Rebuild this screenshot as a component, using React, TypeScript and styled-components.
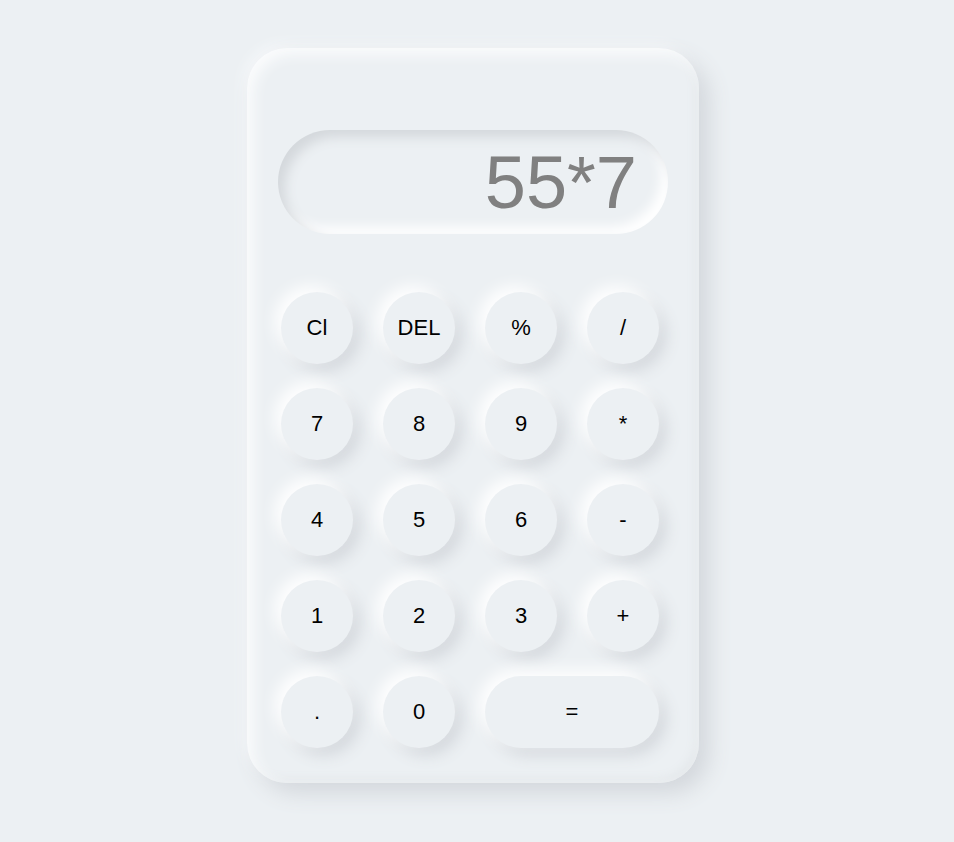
import React from 'react';
import styled, { createGlobalStyle } from 'styled-components';

const GlobalStyle = createGlobalStyle`
  html, body {
    margin: 0;
    background: #ecf0f3;
  }
  body {
    font-family: 'Liberation Sans', Arial, sans-serif;
  }
`;

const Page = styled.div`
  min-height: 842px;
  padding: 48px 0 0 247px;
  box-sizing: border-box;
`;

const Card = styled.div`
  width: 452px;
  box-sizing: border-box;
  padding: 82px 31px 35px 31px;
  background: #ecf0f3;
  border-radius: 40px;
  box-shadow: 10px 10px 22px #d3d7dc, -4px -4px 12px #f6f8fa,
    inset 6px 6px 14px #fbfcfd, inset -4px -4px 10px #e4e8eb;
`;

const Display = styled.div`
  height: 104px;
  border-radius: 52px;
  background: #ecf0f3;
  box-shadow: inset 7px 7px 12px #d4d8dc, inset -7px -7px 12px #ffffff;
  display: flex;
  align-items: center;
  justify-content: flex-end;
  padding: 0 31px 0 0;
  font-size: 74px;
  color: #808080;
`;

const Keys = styled.div`
  margin: 58px 0 0 3px;
  display: grid;
  grid-template-columns: repeat(4, 72px);
  grid-auto-rows: 72px;
  column-gap: 30px;
  row-gap: 24px;
`;

const Key = styled.button<{ $wide?: boolean }>`
  grid-column: ${(p) => (p.$wide ? 'span 2' : 'auto')};
  border: none;
  border-radius: 36px;
  background: #ecf0f3;
  box-shadow: -6px -6px 16px #ffffff, 7px 7px 16px #d3d7dc;
  font-family: 'Liberation Sans', Arial, sans-serif;
  font-size: 22px;
  color: #000;
  padding: 0;
  cursor: pointer;
`;

const keys = [
  'Cl', 'DEL', '%', '/',
  '7', '8', '9', '*',
  '4', '5', '6', '-',
  '1', '2', '3', '+',
  '.', '0', '=',
];

const App = () => (
  <>
    <GlobalStyle />
    <Page>
      <Card>
        <Display>55*7</Display>
        <Keys>
          {keys.map((k) => (
            <Key key={k} $wide={k === '='}>
              {k}
            </Key>
          ))}
        </Keys>
      </Card>
    </Page>
  </>
);

export default App;
